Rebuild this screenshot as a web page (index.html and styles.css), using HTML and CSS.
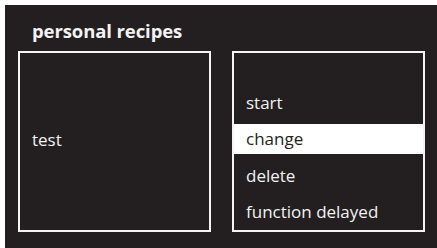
FILE: index.html
```html
<!DOCTYPE html>
<html>
<head>
<meta charset="utf-8">
<link rel="stylesheet" href="styles.css">
</head>
<body>
<div class="screen">
  <h1 class="title">personal recipes</h1>
  <div class="panes">
    <div class="box box-info">
      <span class="info-text">test</span>
    </div>
    <ul class="box menu">
      <li class="menu-item">start</li>
      <li class="menu-item selected">change</li>
      <li class="menu-item">delete</li>
      <li class="menu-item">function delayed</li>
    </ul>
  </div>
</div>
</body>
</html>
```
FILE: styles.css
```css
html, body {
  margin: 0;
  padding: 0;
  background: #ffffff;
}
body {
  width: 437px;
  height: 248px;
  overflow: hidden;
  font-family: "Open Sans", "Noto Sans", sans-serif;
}
.screen {
  margin: 5px 0 0 5px;
  height: 243px;
  background: #231f20;
  color: #f2f2f2;
  padding: 0 12px 0 13px;
  box-sizing: border-box;
  display: flex;
  flex-direction: column;
}
.title {
  margin: 0;
  padding: 14px 0 0 14px;
  height: 46px;
  flex: none;
  box-sizing: border-box;
  font-size: 18.5px;
  font-weight: 700;
  line-height: 24px;
  letter-spacing: -0.1px;
}
.panes {
  display: flex;
  gap: 21px;
  height: 181px;
}
.box {
  width: 193px;
  height: 181px;
  box-sizing: border-box;
  border: 2px solid #f4f4f4;
  margin: 0;
}
.box-info {
  display: flex;
  align-items: center;
  padding: 0 0 0 12px;
}
.info-text {
  font-size: 17px;
  line-height: 22px;
  padding-bottom: 4px;
}
.menu {
  list-style: none;
  display: flex;
  flex-direction: column;
  justify-content: flex-end;
  gap: 6.5px;
  padding: 0 0 3px 0;
}
.menu-item {
  height: 30px;
  padding: 0 0 0 12px;
  font-size: 17px;
  line-height: 30px;
  box-sizing: border-box;
}
.menu-item.selected {
  background: #ffffff;
  color: #231f20;
}
```
